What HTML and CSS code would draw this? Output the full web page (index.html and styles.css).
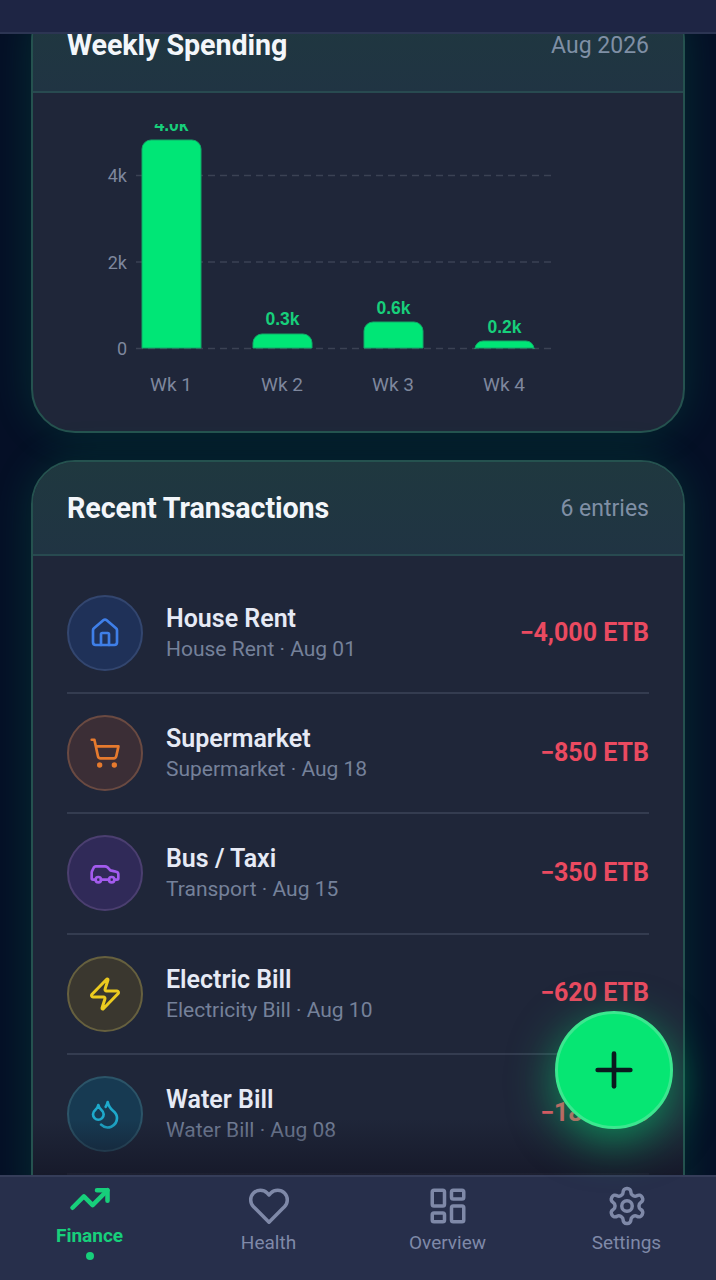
FILE: index.html
```html
<!DOCTYPE html>
<html lang="en">
<head>
<meta charset="utf-8">
<title>Finance</title>
<link rel="stylesheet" href="styles.css">
</head>
<body>
<div class="app">
  <header class="topbar"></header>
  <main class="content">
    <section class="card card-chart">
      <div class="card-head">
        <h2>Weekly Spending</h2>
        <span class="meta">Aug 2026</span>
      </div>
      <div class="chart-body">
        <svg class="chart" viewBox="67 124 582 276" width="582" height="276">
          <g class="grid">
            <line x1="136" y1="175.500" x2="554" y2="175.500"/>
            <line x1="136" y1="262" x2="554" y2="262"/>
            <line x1="136" y1="348.500" x2="554" y2="348.500"/>
          </g>
          <g class="y-labels">
            <text x="127" y="182">4k</text>
            <text x="127" y="269">2k</text>
            <text x="127" y="355">0</text>
          </g>
          <g class="bars">
            <path d="M142 348V149a9 9 0 0 1 9-9h41a9 9 0 0 1 9 9v199z"/>
            <path d="M253 348V343a9 9 0 0 1 9-9h41a9 9 0 0 1 9 9v5z"/>
            <path d="M364 348V331a9 9 0 0 1 9-9h41a9 9 0 0 1 9 9v17z"/>
            <path d="M475 348V349a8 8 0 0 1 8-8h43a8 8 0 0 1 8 8v-1z"/>
          </g>
          <g class="values">
            <text x="171.500" y="131">4.0k</text>
            <text x="282.500" y="325">0.3k</text>
            <text x="393.500" y="314">0.6k</text>
            <text x="504.500" y="333">0.2k</text>
          </g>
          <g class="x-labels">
            <text x="171" y="391">Wk 1</text>
            <text x="282" y="391">Wk 2</text>
            <text x="393" y="391">Wk 3</text>
            <text x="504" y="391">Wk 4</text>
          </g>
        </svg>
      </div>
    </section>

    <section class="card card-list">
      <div class="card-head">
        <h2>Recent Transactions</h2>
        <span class="meta">6 entries</span>
      </div>
      <ul class="tx-list">
        <li class="tx">
          <span class="tx-icon blue">
            <svg viewBox="0 0 24 24"><path d="M15 21v-8a1 1 0 0 0-1-1h-4a1 1 0 0 0-1 1v8"/><path d="M3 10a2 2 0 0 1 .709-1.528l7-5.999a2 2 0 0 1 2.582 0l7 5.999A2 2 0 0 1 21 10v9a2 2 0 0 1-2 2H5a2 2 0 0 1-2-2z"/></svg>
          </span>
          <div class="tx-text"><strong>House Rent</strong><span>House Rent · Aug 01</span></div>
          <span class="amount">−4,000 ETB</span>
        </li>
        <li class="tx">
          <span class="tx-icon orange">
            <svg viewBox="0 0 24 24"><circle cx="8" cy="21" r="1"/><circle cx="19" cy="21" r="1"/><path d="M2.050 2.050h2l2.660 12.420a2 2 0 0 0 2 1.580h9.780a2 2 0 0 0 1.950-1.570l1.650-7.430H5.120"/></svg>
          </span>
          <div class="tx-text"><strong>Supermarket</strong><span>Supermarket · Aug 18</span></div>
          <span class="amount">−850 ETB</span>
        </li>
        <li class="tx">
          <span class="tx-icon purple">
            <svg viewBox="0 0 24 24"><path d="M19 17h2c.6 0 1-.4 1-1v-3c0-.9-.7-1.700-1.500-1.900C18.700 10.600 16 10 16 10s-1.300-1.400-2.200-2.300c-.5-.4-1.100-.7-1.800-.7H5c-.6 0-1.100.4-1.400.9l-1.400 2.900A3.700 3.700 0 0 0 2 12v4c0 .6.4 1 1 1h2"/><circle cx="7" cy="17" r="2"/><path d="M9 17h6"/><circle cx="17" cy="17" r="2"/></svg>
          </span>
          <div class="tx-text"><strong>Bus / Taxi</strong><span>Transport · Aug 15</span></div>
          <span class="amount">−350 ETB</span>
        </li>
        <li class="tx">
          <span class="tx-icon yellow">
            <svg viewBox="0 0 24 24"><path d="M4 14a1 1 0 0 1-.78-1.630l9.900-10.200a.5.5 0 0 1 .86.46l-1.920 6.020A1 1 0 0 0 13 10h7a1 1 0 0 1 .78 1.630l-9.900 10.200a.5.5 0 0 1-.86-.46l1.920-6.020A1 1 0 0 0 11 14z"/></svg>
          </span>
          <div class="tx-text"><strong>Electric Bill</strong><span>Electricity Bill · Aug 10</span></div>
          <span class="amount">−620 ETB</span>
        </li>
        <li class="tx">
          <span class="tx-icon cyan">
            <svg viewBox="0 0 24 24"><path d="M7 16.300c2.200 0 4-1.830 4-4.050 0-1.160-.57-2.260-1.710-3.190S7.290 6.750 7 5.300c-.29 1.450-1.140 2.840-2.290 3.760S3 11.100 3 12.250c0 2.220 1.800 4.050 4 4.050z"/><path d="M12.560 6.600A10.970 10.970 0 0 0 14 3.020c.5 2.500 2 4.900 4 6.500s3 3.500 3 5.500a6.980 6.980 0 0 1-11.910 4.970"/></svg>
          </span>
          <div class="tx-text"><strong>Water Bill</strong><span>Water Bill · Aug 08</span></div>
          <span class="amount">−180 ETB</span>
        </li>
      </ul>
    </section>
    <div class="fade"></div>
  </main>

  <button class="fab" aria-label="Add">
    <svg viewBox="0 0 24 24"><path d="M5 12h14"/><path d="M12 5v14"/></svg>
  </button>

  <nav class="tabbar">
    <a class="tab active">
      <svg viewBox="0 0 24 24"><polyline points="22 7 13.500 15.500 8.500 10.500 2 17"/><polyline points="16 7 22 7 22 13"/></svg>
      <span>Finance</span>
      <i class="dot"></i>
    </a>
    <a class="tab">
      <svg viewBox="0 0 24 24"><path d="M20.840 4.610a5.500 5.500 0 0 0-7.780 0L12 5.670l-1.060-1.060a5.500 5.500 0 0 0-7.780 7.780l1.060 1.060L12 21.230l7.780-7.780 1.060-1.060a5.500 5.500 0 0 0 0-7.780z"/></svg>
      <span>Health</span>
    </a>
    <a class="tab">
      <svg viewBox="0 0 24 24"><rect x="3" y="3" width="7" height="9" rx="1"/><rect x="14" y="3" width="7" height="5" rx="1"/><rect x="14" y="12" width="7" height="9" rx="1"/><rect x="3" y="16" width="7" height="5" rx="1"/></svg>
      <span>Overview</span>
    </a>
    <a class="tab">
      <svg viewBox="0 0 24 24"><path d="M12.220 2h-.44a2 2 0 0 0-2 2v.18a2 2 0 0 1-1 1.730l-.43.25a2 2 0 0 1-2 0l-.15-.08a2 2 0 0 0-2.730.73l-.22.38a2 2 0 0 0 .73 2.730l.15.1a2 2 0 0 1 1 1.720v.51a2 2 0 0 1-1 1.740l-.15.09a2 2 0 0 0-.73 2.730l.22.38a2 2 0 0 0 2.730.73l.15-.08a2 2 0 0 1 2 0l.43.25a2 2 0 0 1 1 1.730V20a2 2 0 0 0 2 2h.44a2 2 0 0 0 2-2v-.18a2 2 0 0 1 1-1.730l.43-.25a2 2 0 0 1 2 0l.15.08a2 2 0 0 0 2.730-.73l.22-.39a2 2 0 0 0-.73-2.730l-.15-.08a2 2 0 0 1-1-1.740v-.5a2 2 0 0 1 1-1.740l.15-.09a2 2 0 0 0 .73-2.730l-.22-.38a2 2 0 0 0-2.730-.73l-.15.08a2 2 0 0 1-2 0l-.43-.25a2 2 0 0 1-1-1.730V4a2 2 0 0 0-2-2z"/><circle cx="12" cy="12" r="3"/></svg>
      <span>Settings</span>
    </a>
  </nav>
</div>
</body>
</html>
```

FILE: styles.css
```css
* { box-sizing: border-box; }

html, body {
  margin: 0;
  padding: 0;
  background: #050f26;
}

body {
  font-family: Roboto, "Liberation Sans", sans-serif;
}

.app {
  position: relative;
  width: 716px;
  height: 1280px;
  display: flex;
  flex-direction: column;
  overflow: hidden;
  background: #050f26;
}

.topbar {
  flex: none;
  height: 34px;
  background: #1e2544;
  border-bottom: 2px solid #2c3553;
  position: relative;
  z-index: 3;
}

.content {
  flex: 1;
  min-height: 0;
  position: relative;
  overflow: hidden;
  padding: 0 31px;
}

.card {
  background: #1f2639;
  border: 2px solid #25524f;
  border-radius: 44px;
  box-shadow: 0 0 44px rgba(0, 230, 118, 0.14);
}

.card-chart {
  margin-top: -37px;
  height: 436px;
}

.card-list {
  margin-top: 27px;
  padding-bottom: 60px;
}

.card-head {
  height: 94px;
  padding: 0 34px;
  display: flex;
  align-items: center;
  justify-content: space-between;
  background: linear-gradient(180deg, #1f383f 0%, #203443 100%);
  border-bottom: 2px solid #284a50;
  border-radius: 42px 42px 0 0;
}

.card-head h2 {
  margin: 0 0 1px;
  font-size: 28.700px;
  font-weight: 700;
  letter-spacing: -0.1px;
  color: #f3f6fa;
}

.meta {
  font-size: 23px;
  color: #7f8fa5;
}

.chart-body {
  padding: 31px 0 0 34px;
}

.chart {
  display: block;
  overflow: hidden;
}

.grid line {
  stroke: #3b4254;
  stroke-width: 1.500;
  stroke-dasharray: 7 5;
}

.y-labels text {
  font-size: 18px;
  fill: #7e879d;
  text-anchor: end;
}

.x-labels text {
  font-size: 19px;
  fill: #7e879d;
  text-anchor: middle;
}

.bars path {
  fill: #00e676;
  stroke: #12a868;
  stroke-width: 1;
}

.values text {
  font-family: "Liberation Sans", sans-serif;
  font-size: 17.500px;
  font-weight: 700;
  fill: #17cf7b;
  text-anchor: middle;
}

.tx-list {
  list-style: none;
  margin: 0;
  padding: 18px 34px 0;
}

.tx {
  height: 120.200px;
  display: flex;
  align-items: center;
  gap: 23px;
  border-bottom: 2px solid #343c50;
}

.tx-icon {
  flex: none;
  width: 76px;
  height: 76px;
  border-radius: 50%;
  display: flex;
  align-items: center;
  justify-content: center;
  border: 2px solid;
}

.tx-icon svg {
  width: 32px;
  height: 32px;
  fill: none;
  stroke: currentColor;
  stroke-width: 2;
  stroke-linecap: round;
  stroke-linejoin: round;
}

.blue { color: #3f7fe8; background: #1f3158; border-color: #33466f; }
.orange { color: #e67a2e; background: #3b2e36; border-color: #6a4a42; }
.purple { color: #a35bee; background: #302a58; border-color: #4b3f70; }
.yellow { color: #eccb1f; background: #3a372f; border-color: #66603f; }
.cyan { color: #1ea9cb; background: #173a52; border-color: #2c5468; }

.tx-icon.yellow svg {
  width: 36px;
  height: 36px;
}

.tx-text {
  flex: 1;
  min-width: 0;
  display: flex;
  flex-direction: column;
  gap: 3px;
}

.tx-text strong {
  font-size: 25px;
  line-height: 30px;
  font-weight: 600;
  color: #e6eaf5;
}

.tx-text span {
  font-size: 21px;
  line-height: 25px;
  color: #75819a;
}

.amount {
  flex: none;
  margin-bottom: 2px;
  font-size: 25px;
  font-weight: 700;
  color: #ea4a60;
}

.fade {
  position: absolute;
  left: 33px;
  right: 33px;
  bottom: 0;
  height: 56px;
  background: linear-gradient(180deg, rgba(20, 22, 38, 0) 0%, rgba(20, 22, 38, 0.75) 100%);
  pointer-events: none;
}

.fab {
  position: absolute;
  left: 555px;
  top: 1011px;
  width: 118px;
  height: 118px;
  padding: 0;
  border-radius: 50%;
  border: 3px solid #3ce78f;
  background: #06e673;
  box-shadow: 0 12px 46px rgba(0, 230, 118, 0.55);
  display: flex;
  align-items: center;
  justify-content: center;
  z-index: 4;
}

.fab svg {
  width: 56px;
  height: 56px;
  fill: none;
  stroke: #0a1a1e;
  stroke-width: 2;
  stroke-linecap: round;
}

.tabbar {
  flex: none;
  height: 105px;
  display: grid;
  grid-template-columns: repeat(4, 179px);
  background: #272f4b;
  border-top: 2px solid #353d59;
  position: relative;
  z-index: 3;
}

.tab {
  display: flex;
  flex-direction: column;
  align-items: center;
  padding-top: 8px;
  color: #7f89a8;
}

.tab svg {
  width: 42px;
  height: 42px;
  fill: none;
  stroke: currentColor;
  stroke-width: 2;
  stroke-linecap: round;
  stroke-linejoin: round;
}

.tab span {
  margin-top: 4px;
  font-size: 19px;
  line-height: 24px;
}

.tab.active {
  padding-top: 1px;
  color: #17cf7b;
}

.tab.active svg {
  stroke-width: 2.600;
}

.tab.active span {
  margin-top: 4px;
  font-size: 19px;
  font-weight: 700;
  line-height: 24px;
}

.dot {
  width: 8px;
  height: 8px;
  margin-top: 4px;
  border-radius: 50%;
  background: #17cf7b;
}
```
